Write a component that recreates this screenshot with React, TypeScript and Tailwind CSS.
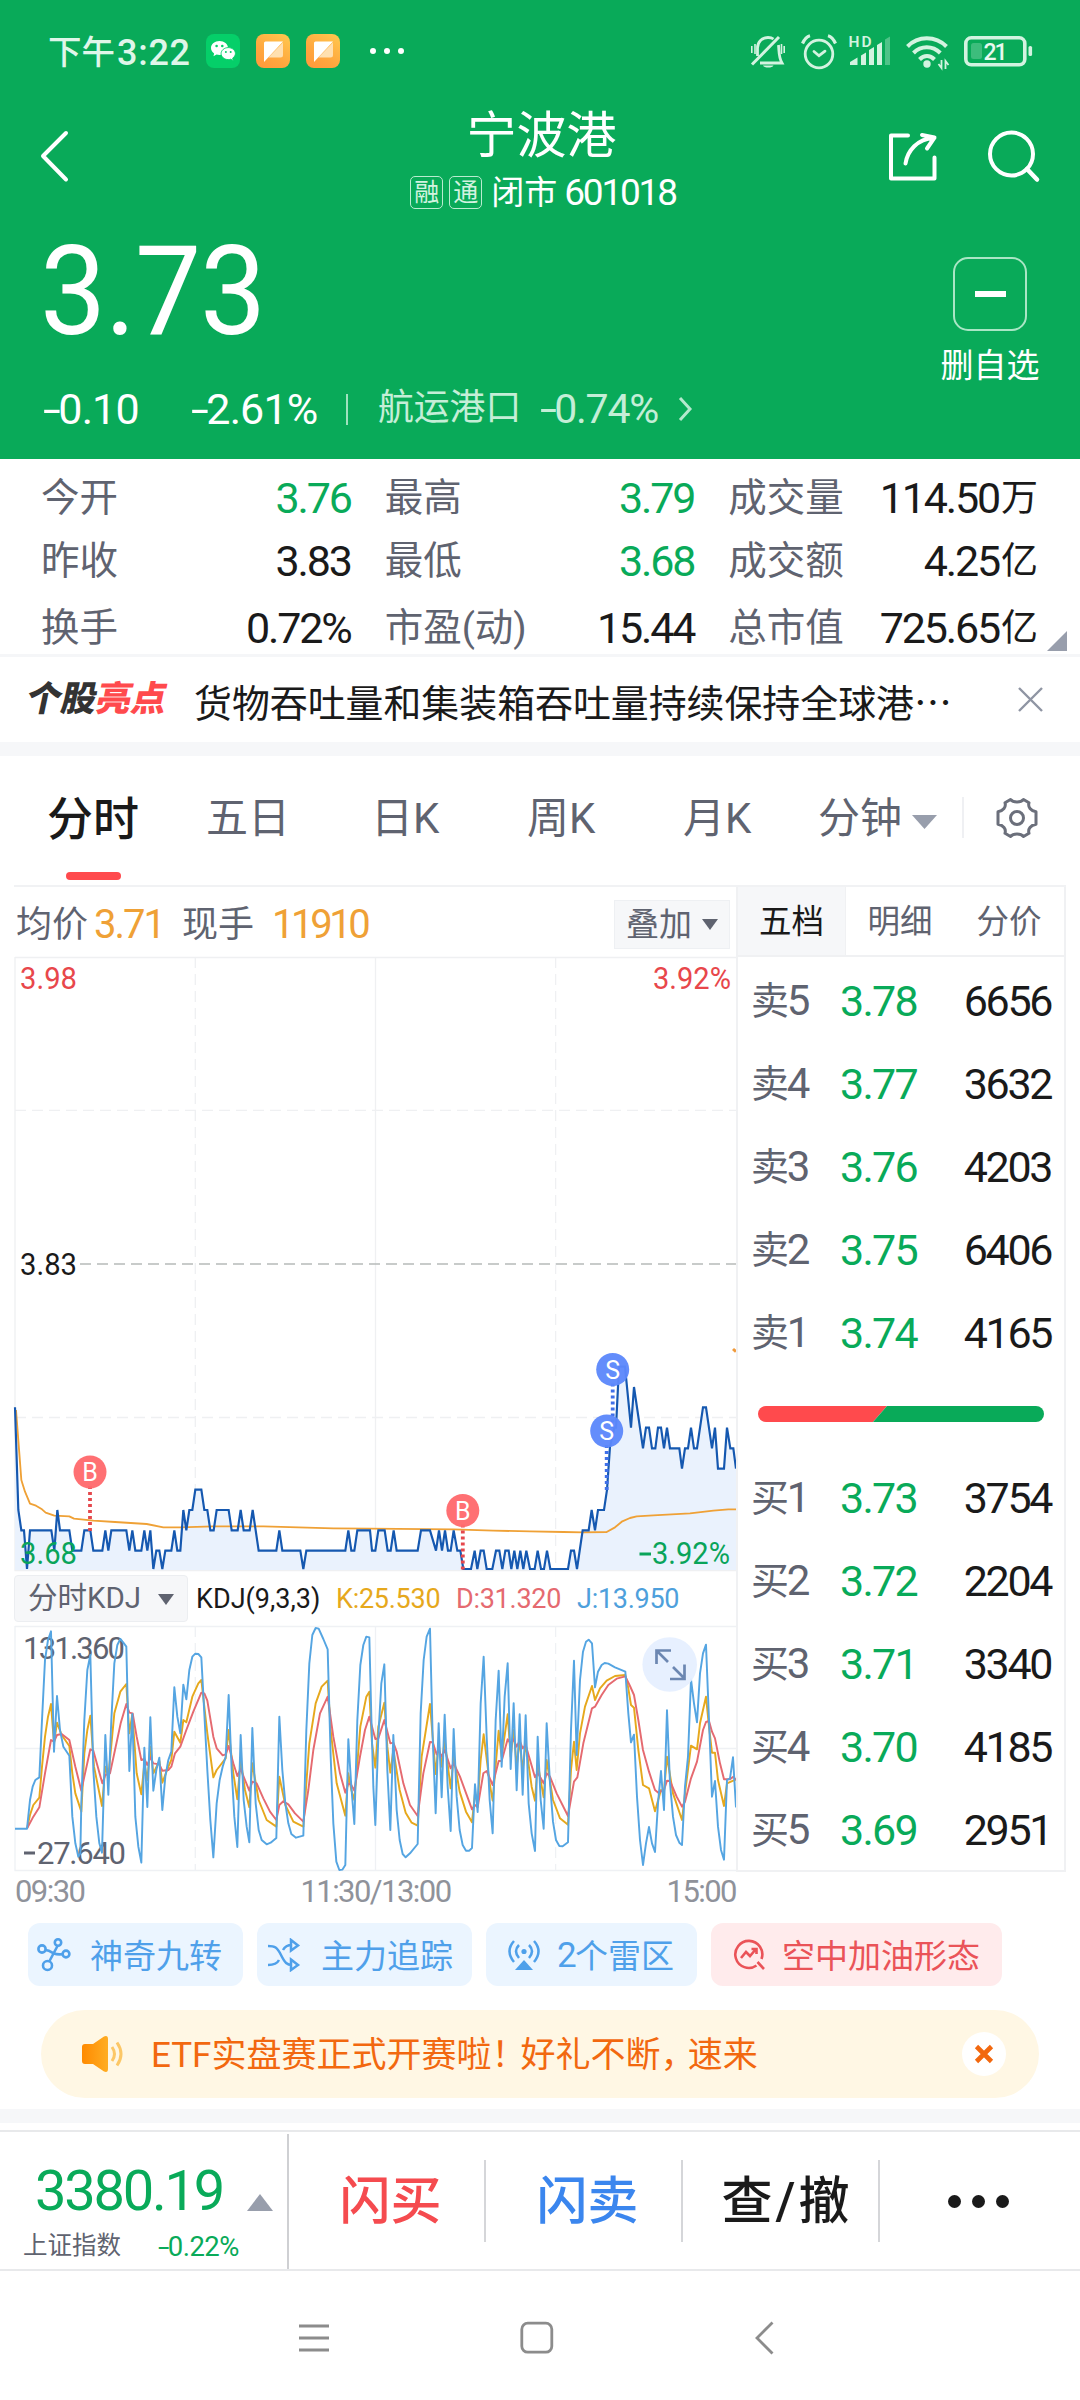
import React from "react";

const GREEN = "text-[#09aa59]";

/* ---------- small pieces ---------- */

function Neg({ children }: { children: React.ReactNode }) {
  return (
    <span className="inline-flex items-center">
      <span className="mr-[0.1em] inline-block origin-left scale-x-150">-</span>
      <span>{children}</span>
    </span>
  );
}

function Caret({ className, w, h }: { className: string; w: number; h: number }) {
  return (
    <svg className={className} width={w} height={h} viewBox="0 0 10 10" preserveAspectRatio="none">
      <path d="M0 0h10L5 10z" fill="currentColor" />
    </svg>
  );
}

function WechatIcon() {
  return (
    <svg width="34" height="34" viewBox="0 0 34 34">
      <rect width="34" height="34" rx="8" fill="#05cf69" />
      <path d="M13.5 7C8.800 7 5 10.100 5 14c0 2.200 1.200 4.100 3.100 5.400L7.500 22.300l3-1.700c1 .3 2 .4 3 .4 4.700 0 8.500-3.100 8.500-7S18.200 7 13.500 7z" fill="#fff" />
      <path d="M22.300 13.600c-4 0-7.200 2.700-7.200 6s3.200 6 7.200 6c.9 0 1.700-.1 2.500-.4l2.400 1.500-.5-2.600c1.700-1.100 2.700-2.700 2.700-4.500 0-3.300-3.100-6-7.100-6z" fill="#fff" stroke="#05cf69" strokeWidth="0.9" />
      <circle cx="10.600" cy="12" r="1.300" fill="#05cf69" />
      <circle cx="16.300" cy="12" r="1.300" fill="#05cf69" />
      <circle cx="19.900" cy="18" r="1" fill="#05cf69" />
      <circle cx="24.700" cy="18" r="1" fill="#05cf69" />
    </svg>
  );
}

function NoteIcon({ id }: { id: string }) {
  return (
    <svg width="34" height="34" viewBox="0 0 34 34">
      <defs>
        <linearGradient id={id} x1="1" y1="0" x2="0.300" y2="1">
          <stop offset="0" stopColor="#ffc94f" />
          <stop offset="0.700" stopColor="#ffa63e" />
          <stop offset="1" stopColor="#ff9c3c" />
        </linearGradient>
      </defs>
      <rect width="34" height="34" rx="8" fill={`url(#${id})`} />
      <path d="M27 8.500v12.500a2.500 2.500 0 0 1-2.500 2.500H12.500z" fill="#ffe0b0" />
      <path d="M8 9a1.500 1.500 0 0 1 1.500-1.500H27L8 28z" fill="#fff" />
    </svg>
  );
}

function StatusIcons() {
  return (
    <svg width="284" height="40" viewBox="750 31 284 40" fill="none" stroke="#d3f3e0" strokeWidth="2.800">
      {/* muted bell */}
      <path d="M752 64.500 779 37" strokeWidth="3" />
      <path d="M757.500 56V48c0-6 4.500-10.500 10.500-10.500 2.500 0 4.300.6 5.500 1.500M778.500 45c.8 8 0 12 3.500 18H760" />
      <path d="M763 65.500a5.500 3 0 0 0 10.500 0z" fill="#d3f3e0" stroke="none" />
      <path d="M751.800 46v7M755 44v10M781.500 44v10M784.200 46v7" strokeWidth="1.600" />
      {/* alarm */}
      <circle cx="819" cy="54" r="13.800" />
      <path d="m814 51.500 5 4.200 6-4.500" strokeLinecap="round" />
      <path d="M802.500 43.500q3-6.500 7.500-7.700M835.500 43.500q-3-6.500-7.500-7.700" strokeWidth="3.200" />
      {/* signal */}
      <text x="848.500" y="46.500" textLength="23" fill="#d3f3e0" stroke="none" fontSize="15.500" fontWeight="600" fontFamily="Roboto">HD</text>
      <g fill="#d3f3e0" stroke="none">
        <path d="M850 65v-3l7.500-4.500V65zM861 65V55.500l5-3V65zM869 65V50l5-3v18zM877 65V45l5-3v23z" />
        <path d="M885 65V39.500l5-3V65z" opacity="0.350" />
      </g>
      {/* wifi */}
      <g strokeWidth="4">
        <path d="M907.500 46.500c10.500-11 28-11 39 0" />
        <path d="M913.500 53c7.500-7.600 19-7.600 26.800 0" />
        <path d="M919.500 59.500c4.500-4.600 10.500-4.600 15 0" />
      </g>
      <circle cx="927" cy="64" r="3.700" fill="#d3f3e0" stroke="none" />
      <path d="M941.500 60v8l-3-4M945.500 69v-8l3 4" strokeWidth="1.800" />
      {/* battery */}
      <rect x="965.800" y="37.800" width="59" height="27" rx="5.500" strokeWidth="3.600" />
      <rect x="971" y="43" width="11" height="16" rx="2.500" fill="#3dbd7c" stroke="none" />
      <rect x="1028.500" y="46" width="3.600" height="10" rx="1.600" fill="#d3f3e0" stroke="none" />
      <text x="983.500" y="59.500" textLength="24" fill="#e8f9ef" stroke="none" fontSize="23" fontWeight="500" fontFamily="Roboto">21</text>
    </svg>
  );
}

/* ---------- header ---------- */

function Header() {
  return (
    <header className="flex h-[459px] flex-col bg-[#09aa59] text-white">
      <div className="flex h-[102px] items-center justify-between pl-[48px] pr-[46px]">
        <div className="flex items-center">
          <span className="flex w-[158px] items-center whitespace-nowrap pt-[3px] text-[33.500px] font-medium leading-none text-[#dff6e9]">
            下午<span className="ml-[2px] text-[36px] tracking-[0.020em]">3:22</span>
          </span>
          <span className="flex gap-[16px]">
            <WechatIcon />
            <NoteIcon id="note-a" />
            <NoteIcon id="note-b" />
          </span>
          <span className="ml-[30px] flex gap-[8px]">
            <i className="size-[6px] rounded-full bg-white" />
            <i className="size-[6px] rounded-full bg-white" />
            <i className="size-[6px] rounded-full bg-white" />
          </span>
        </div>
        <StatusIcons />
      </div>

      <div className="flex h-[120px] justify-between">
        <svg className="ml-[38px] mt-[26px] w-[366px]" width="366" height="56" viewBox="38 128 366 56" fill="none">
          <path d="M66 133 43 156l23 23.500" stroke="#fff" strokeWidth="4" strokeLinecap="round" strokeLinejoin="round" />
        </svg>
        <div className="flex w-[270px] flex-col items-center pt-[9px]">
          <h1 className="text-[50px] leading-[50px]">宁波港</h1>
          <div className="mt-[11px] flex h-[40px] items-center whitespace-nowrap pl-[3px]">
            <span className="flex size-[33px] items-center justify-center rounded-[5px] border-[1.500px] border-[#b9ecd0] text-[25px] leading-none text-[#d3f3e0]">融</span>
            <span className="ml-[6px] flex size-[33px] items-center justify-center rounded-[5px] border-[1.500px] border-[#b9ecd0] text-[25px] leading-none text-[#d3f3e0]">通</span>
            <span className="ml-[9px] text-[33px] leading-none">闭市</span>
            <span className="ml-[7px] text-[37px] leading-none tracking-[-0.060em]">601018</span>
          </div>
        </div>
        <svg className="mr-[36px] mt-[26px]" width="365" height="56" viewBox="679 128 365 56" fill="none" stroke="#fff" strokeWidth="4" strokeLinecap="round" strokeLinejoin="round">
          <path d="M908 135.500H891v43h43.500v-21" />
          <path d="M905.500 163.500c2-13 12-24.500 28-25.500M922 135l12.500 2.500-7.500 11" />
          <circle cx="1011.500" cy="154" r="21.500" />
          <path d="m1027 169 10 10.500" strokeWidth="4.500" />
        </svg>
      </div>

      <div className="flex grow justify-between">
        <div className="flex flex-col">
          <div className="ml-[40px] mt-[7px] h-[126px] origin-left scale-x-[0.950] text-[124px] leading-[126px] tracking-[-0.010em]">
            3.73
          </div>
          <div className="mt-[21px] flex h-[66px] items-center whitespace-nowrap text-[43px] leading-none">
            <span className="ml-[43px] w-[148px] tracking-[-0.020em]"><Neg>0.10</Neg></span>
            <span className="w-[155px] tracking-[-0.020em]"><Neg>2.61%</Neg></span>
            <i className="h-[31px] w-[2px] bg-[#9fe2be]" />
            <span className="ml-[30px] w-[162px] text-[35.800px] text-[#c4eed7]">航运港口</span>
            <span className="w-[138px] text-[41px] tracking-[-0.030em] text-[#c4eed7]"><Neg>0.74%</Neg></span>
            <svg width="16" height="26" viewBox="0 0 16 26" fill="none">
              <path d="m2 2 10 11L2 24" stroke="#b4e9cd" strokeWidth="3" />
            </svg>
          </div>
        </div>
        <div className="mr-[40px] mt-[35px] flex w-[100px] flex-col items-center">
          <div className="flex size-[74px] items-center justify-center rounded-[15px] border-2 border-[#a9e6c5]">
            <i className="h-[6px] w-[31px] bg-white" />
          </div>
          <span className="mt-[18px] whitespace-nowrap text-[33px] leading-none">删自选</span>
        </div>
      </div>
    </header>
  );
}

/* ---------- quote statistics ---------- */

const STATS = [
  { h: "h-[62px] pt-[17px]", cells: [["今开", "3.76", "", GREEN], ["最高", "3.79", "", GREEN], ["成交量", "114.50", "万", "text-[#1a1a1a]"]] },
  { h: "h-[63px] pt-[17px]", cells: [["昨收", "3.83", "", "text-[#1a1a1a]"], ["最低", "3.68", "", GREEN], ["成交额", "4.25", "亿", "text-[#1a1a1a]"]] },
  { h: "h-[68px] pt-[21px]", cells: [["换手", "0.72%", "", "text-[#1a1a1a]"], ["市盈(动)", "15.44", "", "text-[#1a1a1a]"], ["总市值", "725.65", "亿", "text-[#1a1a1a]"]] },
];

function Stats() {
  return (
    <section className="relative h-[198px] border-b-[3px] border-[#f5f6f8] pl-[41px] pr-[42px]">
      {STATS.map((row, r) => (
        <div key={r} className={`flex items-center gap-[34px] ${row.h}`}>
          {row.cells.map(([label, value, unit, color]) => (
            <div key={label} className="flex w-[310px] items-center justify-between whitespace-nowrap leading-none">
              <span className="text-[38.500px] text-[#5f6370]">{label}</span>
              <span className={`flex items-center ${color}`}>
                <span className="text-[43px] tracking-[-0.050em]">{value}</span>
                {unit && <span className="ml-[2px] text-[37px]">{unit}</span>}
              </span>
            </div>
          ))}
        </div>
      ))}
      <svg className="absolute bottom-[3px] right-[13px]" width="20" height="20" viewBox="0 0 20 20">
        <path d="M20 0v20H0z" fill="#989eac" />
      </svg>
    </section>
  );
}

function Highlight() {
  return (
    <section className="flex h-[85px] items-center">
      <div className="ml-[27px] flex w-[167px] -skew-x-12 items-center whitespace-nowrap text-[35px] font-black leading-none text-[#333]">
        个股<span className="text-[#ff4a4d]">亮点</span>
      </div>
      <p className="w-[824px] whitespace-nowrap pt-[2px] font-['Noto_Sans_CJK_SC',sans-serif] text-[37.900px] leading-none text-[#1a1a1a]">
        货物吞吐量和集装箱吞吐量持续保持全球港…
      </p>
      <svg width="25" height="25" viewBox="0 0 25 25">
        <path d="m1 1 23 23M24 1 1 24" stroke="#8f95a3" strokeWidth="2.400" />
      </svg>
    </section>
  );
}

function Tabs() {
  return (
    <nav className="mx-[14px] flex h-[131px] whitespace-nowrap border-b-2 border-[#f1f2f4] text-[42px] leading-none text-[#5f6370]">
      <div className="flex w-[171px] flex-col items-start pl-[33px] pt-[40px]">
        <span className="text-[46px] font-medium text-[#1a1a1a]">分时</span>
        <i className="ml-[19px] mt-[30px] h-[8px] w-[55px] rounded-full bg-[#ff4a4d]" />
      </div>
      <span className="w-[154px] pl-[21px] pt-[42px]">五日</span>
      <span className="w-[158px] pl-[32px] pt-[42px]">日K</span>
      <span className="w-[158px] pl-[30px] pt-[42px]">周K</span>
      <span className="w-[134px] pl-[28px] pt-[42px]">月K</span>
      <span className="flex w-[173px] items-start pl-[29px] pt-[42px]">
        分钟<Caret className="ml-[10px] mt-[17px] text-[#989eac]" w={25} h={14} />
      </span>
      <i className="mt-[41px] h-[41px] w-[2px] bg-[#eff0f3]" />
      <svg className="ml-[31px] mt-[40px]" width="44" height="44" viewBox="-22 -22 44 44" fill="none" stroke="#6b6f7b" strokeWidth="3">
        <path strokeLinejoin="round" d="M-6.500 -18.500Q-4.500 -16 0 -16Q4.500 -16 6.500 -18.500L12 -15.300Q11 -12 13 -9.500Q15 -7 19 -6.300V6.300Q15 7 13 9.500Q11 12 12 15.300L6.500 18.500Q4.500 16 0 16Q-4.500 16 -6.500 18.500L-12 15.300Q-11 12 -13 9.500Q-15 7 -19 6.300V-6.300Q-15 -7 -13 -9.500Q-11 -12 -12 -15.300Z" />
        <circle r="6.500" />
      </svg>
    </nav>
  );
}

/* ---------- charts ---------- */

/* Series points are stored at three units per pixel. */
const PRICE =
  "45,232 55,540 64,601 72,601 81,717 90,601 154,601 163,662 172,540 180,601 208,601 217,662 244,662 253,601 271,601 280,662 307,662 316,601 325,662 334,601 379,601 388,662 397,601 406,662 424,662 433,601 442,662 451,601 460,717 469,662 478,662 487,717 496,662 514,662 523,601 532,662 541,662 550,540 559,601 568,540 577,540 586,479 604,479 613,540 622,540 631,601 641,601 650,540 686,540 695,601 713,601 722,540 731,601 749,601 758,540 776,662 829,662 838,601 847,662 901,662 910,717 919,662 1036,662 1045,601 1054,662 1063,662 1072,601 1110,601 1116,662 1126,662 1135,601 1154,601 1163,662 1172,662 1181,601 1190,662 1253,662 1263,601 1290,601 1308,662 1317,601 1326,662 1335,601 1344,662 1352,662 1361,601 1372,662 1381,662 1390,717 1413,717 1424,662 1432,717 1442,662 1451,662 1460,717 1477,717 1488,662 1498,662 1507,717 1516,662 1526,662 1534,717 1543,662 1552,717 1561,662 1570,717 1579,662 1590,717 1604,717 1613,662 1623,717 1632,717 1641,662 1651,717 1704,717 1713,662 1722,662 1731,717 1748,601 1766,601 1775,540 1785,601 1794,540 1812,540 1821,480 1830,350 1843,293 1848,293 1857,110 1875,110 1893,293 1902,171 1929,355 1938,293 1947,293 1956,355 1966,355 1974,293 1983,293 1992,355 2001,293 2010,355 2038,355 2046,416 2055,355 2064,355 2073,293 2082,355 2091,355 2109,232 2118,232 2136,355 2145,293 2154,416 2172,416 2181,293 2191,355 2200,355 2208,416";
const AVERAGE =
  "48,240 58,370 64,450 75,485 90,521 108,527 126,538 137,548 163,557 208,559 222,566 280,572 345,576 440,582 490,592 540,592 640,589 790,589 1000,595 1110,596 1360,598 1480,602 1590,604 1690,606 1750,607 1820,606 1845,592 1867,574 1890,564 1910,559 1960,556 2070,550 2140,542 2185,538 2208,538";
const J_LINE =
  "45,776 81,776 90,690 98,650 106,630 118,622 126,450 135,270 144,210 153,184 162,545 171,378 180,480 190,530 208,557 217,740 226,820 235,860 241,850 244,700 253,450 262,300 271,255 280,600 289,740 298,820 306,848 316,495 325,674 334,450 343,280 352,225 361,207 370,218 379,230 388,603 397,432 406,740 415,830 424,878 433,533 442,711 451,442 460,662 469,600 478,563 487,720 496,620 505,570 514,545 523,352 532,440 541,490 550,344 559,388 568,300 577,260 586,251 595,252 604,262 622,600 631,750 640,862 650,700 659,630 668,590 677,560 686,375 695,600 703,740 712,831 722,495 731,690 740,770 748,817 757,474 767,700 776,780 785,810 800,823 812,818 829,804 838,440 847,600 856,700 865,760 874,792 888,803 910,797 919,480 928,280 937,195 947,174 956,176 970,207 983,238 992,560 1000,760 1009,875 1018,900 1027,899 1036,885 1045,508 1054,650 1063,762 1072,450 1081,285 1090,225 1099,200 1108,202 1114,440 1120,650 1126,765 1135,500 1144,340 1153,283 1162,600 1171,780 1180,495 1190,720 1199,810 1208,852 1217,862 1230,850 1253,822 1262,430 1271,270 1280,200 1290,176 1298,500 1307,730 1316,460 1325,682 1334,434 1343,650 1352,783 1361,477 1370,680 1379,780 1388,825 1398,842 1408,842 1416,834 1425,643 1433,726 1442,400 1451,260 1460,500 1469,690 1478,790 1487,450 1496,302 1505,590 1514,380 1523,280 1532,597 1541,400 1550,661 1559,433 1568,674 1577,436 1586,700 1595,790 1605,843 1613,500 1622,690 1631,776 1640,460 1650,640 1659,755 1668,810 1678,828 1688,829 1704,817 1713,480 1722,272 1730,555 1740,330 1749,245 1758,215 1766,209 1776,220 1785,352 1794,305 1805,285 1814,279 1825,281 1845,292 1876,305 1885,430 1893,517 1902,494 1911,680 1920,810 1929,885 1938,820 1947,771 1956,820 1965,846 1974,700 1983,603 1992,720 2001,421 2010,640 2019,740 2028,795 2038,818 2046,825 2055,650 2064,560 2073,328 2082,400 2091,457 2100,310 2109,250 2118,224 2127,450 2136,680 2145,633 2154,770 2163,840 2172,869 2181,630 2190,625 2199,562 2208,712";
const K_LINE =
  "81,776 90,735 100,705 118,683 126,590 135,500 144,440 153,402 162,520 171,458 185,495 208,528 217,610 226,670 244,725 253,550 262,480 271,437 282,590 306,708 316,590 325,620 343,430 361,365 379,342 388,490 397,432 410,610 424,673 433,580 442,630 451,530 460,610 478,573 487,638 505,590 514,570 523,485 541,518 550,450 559,457 577,380 595,340 604,330 622,490 640,622 650,600 677,565 686,480 700,610 712,688 722,570 735,660 748,712 757,580 776,690 800,750 829,770 838,620 856,705 880,755 910,770 919,640 928,520 947,400 965,350 983,332 992,480 1010,640 1036,737 1045,610 1054,660 1063,690 1081,470 1099,380 1108,365 1116,520 1126,593 1135,470 1153,398 1162,530 1171,608 1180,540 1199,660 1217,728 1235,758 1253,767 1265,560 1290,402 1307,612 1316,520 1325,590 1334,510 1352,655 1361,560 1379,665 1398,725 1416,757 1425,670 1433,700 1442,570 1451,493 1469,640 1478,692 1496,482 1505,560 1523,433 1532,560 1541,480 1550,590 1559,510 1568,600 1577,520 1595,650 1605,692 1613,580 1631,682 1640,570 1659,690 1680,745 1704,764 1713,600 1722,515 1730,600 1740,490 1755,410 1776,348 1785,390 1800,355 1820,332 1845,318 1876,315 1885,355 1893,405 1902,413 1915,540 1929,645 1947,655 1965,724 1983,660 1992,665 2001,560 2019,670 2046,750 2055,670 2073,527 2091,538 2100,460 2118,380 2127,470 2136,548 2145,548 2154,630 2172,708 2181,640 2208,628";
const D_LINE =
  "81,776 100,740 118,712 135,610 153,510 162,515 171,495 185,492 208,510 226,590 244,662 253,620 271,538 280,542 307,640 316,615 330,610 345,540 362,460 379,402 388,428 398,430 410,500 424,570 433,567 442,585 451,562 460,580 478,583 487,602 505,600 514,590 525,550 541,530 559,480 580,425 604,368 613,370 622,392 640,500 650,535 668,556 677,553 686,528 700,580 712,618 722,597 735,630 748,662 757,635 770,640 790,685 810,725 829,750 838,705 850,694 865,703 885,730 910,755 925,660 940,540 960,430 983,380 1000,500 1020,610 1036,668 1045,640 1054,645 1063,662 1080,560 1095,480 1108,440 1126,507 1135,505 1153,450 1171,520 1180,518 1190,545 1210,640 1230,705 1253,738 1270,610 1290,516 1298,517 1310,553 1316,540 1325,560 1334,540 1352,595 1361,580 1380,620 1416,718 1425,705 1433,712 1450,610 1460,603 1478,645 1496,573 1505,573 1523,508 1532,520 1541,508 1550,530 1559,512 1568,535 1577,525 1605,622 1613,608 1631,640 1640,610 1650,620 1670,670 1704,738 1722,635 1732,622 1750,520 1776,415 1785,410 1805,375 1825,345 1850,326 1876,319 1890,348 1902,375 1915,450 1929,540 1947,605 1965,660 1975,668 1992,660 2001,632 2010,633 2030,680 2046,710 2055,695 2073,625 2091,575 2109,480 2118,456 2127,453 2136,485 2145,505 2160,580 2172,628 2190,628 2200,620 2208,630";

const MARKS = [
  { x: 90, y: 1472, t: "B", fill: "#ff6a6d", line: "#e5484d", to: 1531 },
  { x: 462.800, y: 1510.500, t: "B", fill: "#ff6a6d", line: "#e5484d", to: 1570 },
  { x: 612.700, y: 1369.500, t: "S", fill: "#5d88fb", line: "#4070e8", to: 1428 },
  { x: 606.700, y: 1431, t: "S", fill: "#5d88fb", line: "#4070e8", to: 1490 },
];

function PriceChart() {
  return (
    <svg className="block shrink-0" width="737" height="617" viewBox="0 956 737 617" fontFamily="Roboto" fontSize="30.500">
      <g fill="none" stroke="#eff0f2" strokeWidth="1.300">
        <path d="M15 957.500H737M15 957V1570.500H737M375.500 957v613" />
        <path d="M195.300 957v613M555.600 957v613" strokeDasharray="11 6" />
        <path d="M15 1110.300H737M15 1417.500H737" strokeDasharray="11 6" />
      </g>
      <path d="M80 1264H737" stroke="#b6bab9" strokeWidth="1.700" strokeDasharray="11 6" />
      <g transform="translate(0 1330) scale(0.33333)" fill="none" strokeLinejoin="round">
        <polygon points={`45,720 ${PRICE} 2208,720`} fill="#eaf2fd" />
        <polyline points={AVERAGE} stroke="#efa136" strokeWidth="5.500" />
        <polyline points={PRICE} stroke="#1558b0" strokeWidth="6.500" strokeLinejoin="miter" />
        <path d="M2199 57l9 8" stroke="#f09a3c" strokeWidth="9" />
      </g>
      {MARKS.map((m, i) => (
        <g key={i}>
          <path d={`M${m.x} ${m.y + 14}V${m.to}`} stroke={m.line} strokeWidth="3.800" strokeDasharray="3 3" />
          <circle cx={m.x} cy={m.y} r="16.500" fill={m.fill} fillOpacity="0.960" />
          <text x={m.x} y={m.y + 9} textAnchor="middle" fontSize="25" fill="#fff">{m.t}</text>
        </g>
      ))}
      <text x="20" y="989" textLength="57" lengthAdjust="spacingAndGlyphs" fill="#e8474b">3.98</text>
      <text x="731" y="989" textAnchor="end" textLength="78" lengthAdjust="spacingAndGlyphs" fill="#e8474b">3.92%</text>
      <text x="20" y="1275" textLength="57" lengthAdjust="spacingAndGlyphs" fill="#1a1a1a">3.83</text>
      <text x="20" y="1564" textLength="57" lengthAdjust="spacingAndGlyphs" fill="#09a45a">3.68</text>
      <rect x="639.500" y="1552.500" width="11.500" height="3" fill="#09a45a" />
      <text x="652" y="1564" textLength="78" lengthAdjust="spacingAndGlyphs" fill="#09a45a">3.92%</text>
    </svg>
  );
}

function KdjChart() {
  return (
    <svg className="block shrink-0" width="737" height="250" viewBox="0 1624 737 250" fontFamily="Roboto" fontSize="31">
      <g fill="none" stroke="#eff1f4" strokeWidth="1.300">
        <path d="M15 1626.500H737M15 1626V1870.500H737M375.500 1626v244M15 1748.500H737" />
        <path d="M195.300 1626v244M555.600 1626v244" strokeDasharray="11 6" />
      </g>
      <text x="23" y="1658.500" textLength="102" fill="#5f6370">131.360</text>
      <rect x="24" y="1851.500" width="11" height="3" fill="#5f6370" />
      <text x="37" y="1864" textLength="89" fill="#5f6370">27.640</text>
      <g transform="translate(0 1570) scale(0.33333)" fill="none" strokeLinejoin="round" strokeWidth="5.800">
        <polyline points={K_LINE} stroke="#e6a81c" />
        <polyline points={D_LINE} stroke="#e56a70" />
        <polyline points={J_LINE} stroke="#55a5e2" />
      </g>
      <circle cx="669.700" cy="1664.500" r="27.300" fill="#e6efff" fillOpacity="0.950" />
      <path d="M656.500 1664v-13.500H671M657 1651l11 11M673 1667l11 11M670 1679h14.500v-14.500" fill="none" stroke="#6c87b2" strokeWidth="2.700" />
    </svg>
  );
}

function ChartColumn() {
  return (
    <div className="flex w-[736px] flex-col whitespace-nowrap leading-none">
      <div className="flex h-[69px] shrink-0 items-center pl-[16px] pr-[6px] pt-[5px] text-[36px] text-[#5f6370]">
        <span className="pt-[2px]">均价</span>
        <span className="ml-[6px] w-[88px] pt-[1px] text-[40px] tracking-[-0.050em] text-[#efa136]">3.71</span>
        <span className="pt-[2px]">现手</span>
        <span className="ml-[18px] pt-[1px] text-[40px] tracking-[-0.085em] text-[#efa136]">11910</span>
        <span className="ml-auto flex h-[49px] w-[116px] items-center border border-[#eef0f3] bg-[#f6f7f9] pl-[11px] text-[33px]">
          叠加<Caret className="ml-[10px]" w={16} h={11} />
        </span>
      </div>
      <PriceChart />
      <div className="flex h-[51px] shrink-0 items-center pb-[1px] pl-[14px] text-[27px]">
        <span className="flex h-[47px] w-[174px] items-center rounded-[4px] border border-[#eceef1] bg-[#f6f7f9] pl-[13px] pt-[2px] text-[29.500px] text-[#5f6370]">
          分时KDJ<Caret className="ml-[17px]" w={16} h={11} />
        </span>
        <span className="ml-[8px] w-[140px] pt-[2px] text-[#1a1a1a]">KDJ(9,3,3)</span>
        <span className="w-[120px] pt-[2px] tracking-[-0.010em] text-[#e6a81c]">K:25.530</span>
        <span className="w-[121px] pt-[2px] tracking-[-0.010em] text-[#e56a70]">D:31.320</span>
        <span className="pt-[2px] tracking-[-0.010em] text-[#4ea0dc]">J:13.950</span>
      </div>
      <KdjChart />
      <div className="flex h-[31px] shrink-0 justify-between pl-[15px] pt-[2px] text-[31px] tracking-[-0.050em] text-[#8f929a]">
        <span>09:30</span>
        <span>11:30/13:00</span>
        <span>15:00</span>
      </div>
    </div>
  );
}

/* ---------- order book ---------- */

const ASKS = [["卖5", "3.78", "6656"], ["卖4", "3.77", "3632"], ["卖3", "3.76", "4203"], ["卖2", "3.75", "6406"], ["卖1", "3.74", "4165"]];
const BIDS = [["买1", "3.73", "3754"], ["买2", "3.72", "2204"], ["买3", "3.71", "3340"], ["买4", "3.70", "4185"], ["买5", "3.69", "2951"]];

function Level({ row }: { row: string[] }) {
  return (
    <div className="flex h-[83px] items-center pl-[13px] pr-[13px] pt-[3px] text-[43px] tracking-[-0.055em]">
      <span className="flex w-[89px] items-center text-[38px] text-[#5f6370]">
        {row[0][0]}<span className="text-[42px]">{row[0][1]}</span>
      </span>
      <span className={`tracking-[-0.040em] ${GREEN}`}>{row[1]}</span>
      <span className="ml-auto text-[#1a1a1a]">{row[2]}</span>
    </div>
  );
}

function OrderBook() {
  return (
    <aside className="flex h-[985px] w-[330px] flex-col whitespace-nowrap border-b-2 border-l-2 border-r-2 border-[#f0f1f3] leading-none">
      <div className="flex h-[70px] shrink-0 border-b-2 border-[#f0f1f3] text-[32.500px] text-[#5f6370]">
        <span className="flex w-[108px] items-center justify-center border-r border-[#f0f1f3] bg-[#f6f7f9] pt-[3px] text-[#1a1a1a]">五档</span>
        <span className="flex w-[108px] items-center justify-center pt-[3px]">明细</span>
        <span className="flex w-[110px] items-center justify-center pt-[3px]">分价</span>
      </div>
      <div className="pt-[1px]">
        {ASKS.map((r) => <Level key={r[0]} row={r} />)}
      </div>
      <svg className="my-[33px] ml-[20px] shrink-0" width="286" height="16" viewBox="0 0 286 16">
        <path d="M8 0H129L115 16H8A8 8 0 0 1 8 0z" fill="#ff4a4d" />
        <path d="M129 0H278a8 8 0 0 1 0 16H115z" fill="#09aa59" />
      </svg>
      <div>
        {BIDS.map((r) => <Level key={r[0]} row={r} />)}
      </div>
    </aside>
  );
}

/* ---------- chips, banner and bars ---------- */

function Chips() {
  const blue = "flex h-[63px] items-center rounded-[12px] bg-[#ebf5ff] text-[#4fa0ea]";
  return (
    <div className="mt-[18px] flex gap-[14px] whitespace-nowrap pl-[28px] text-[33px] leading-none">
      <span className={`${blue} w-[215px] pl-[9px]`}>
        <svg className="mr-[19px]" width="34" height="34" viewBox="0 0 34 34" fill="none" stroke="#4fa0ea" strokeWidth="2.600">
          <circle cx="5" cy="11" r="3.600" />
          <circle cx="21" cy="4.500" r="3.200" />
          <circle cx="29" cy="16" r="3.400" />
          <circle cx="10.500" cy="27.500" r="4.500" />
          <path d="M8.500 12c5 .5 6 2.500 8.500 3.500s5 1 8.500.7M20.500 8 12.500 23" />
        </svg>
        <span className="pt-[3px]">神奇九转</span>
      </span>
      <span className={`${blue} w-[215px] pl-[10px]`}>
        <svg className="mr-[20px]" width="34" height="34" viewBox="0 0 34 34" fill="none" stroke="#4fa0ea" strokeWidth="2.500">
          <path d="M1 8c7 0 9 1 13 9s6 10 11 10M1 27c6 0 9-1 11-5M16 12c2-4 5-5 9-5M24 2l7 5.500-7 5zM24 21.500l7 5.500-7 5z" />
        </svg>
        <span className="pt-[3px]">主力追踪</span>
      </span>
      <span className={`${blue} w-[211px] pl-[21px]`}>
        <svg className="mr-[16px]" width="34" height="34" viewBox="0 0 34 34" fill="none" stroke="#4fa0ea" strokeWidth="2.500">
          <path d="M7 3Q-2 13 7 24M27 3q9 10 0 21M12 7q-6 6 0 13M22 7q6 6 0 13" />
          <circle cx="17" cy="13.500" r="2.600" fill="#4fa0ea" stroke="none" />
          <path d="m17 22 9 10H8z" fill="#4fa0ea" stroke="none" />
        </svg>
        <span className="pt-[2px] text-[35px] tracking-[-0.050em]">2</span>
        <span className="pt-[3px]">个雷区</span>
      </span>
      <span className="flex h-[63px] w-[291px] items-center rounded-[12px] bg-[#ffebec] pl-[22px] text-[#ea5358]">
        <svg className="mr-[15px]" width="34" height="34" viewBox="0 0 34 34" fill="none" stroke="#ea5358" strokeWidth="2.600">
          <path d="M23.500 27.500A13.500 13.500 0 1 1 28.500 21M24.500 24l6.500 7M8 20l5-6 4 4 6-7M18.500 11h5v5" />
        </svg>
        <span className="pt-[3px]">空中加油形态</span>
      </span>
    </div>
  );
}

function Banner() {
  return (
    <div className="ml-[41px] mt-[24px] flex h-[88px] w-[998px] items-center whitespace-nowrap rounded-full bg-[#fff7e4] pl-[40px] pr-[33px] text-[35px] leading-none text-[#f2680f]">
      <svg width="44" height="38" viewBox="0 0 44 38">
        <defs>
          <linearGradient id="horn"><stop offset="0" stopColor="#ff8a00" /><stop offset="1" stopColor="#ffad22" /></linearGradient>
        </defs>
        <path d="M4 9h8L23 1.500Q27 0 27 4V34q0 4-4 2.500L12 29H4q-3 0-3-3V12q0-3 3-3z" fill="url(#horn)" />
        <path d="M31 12q5 7 0 14M36 7.500q8 11.500 0 23" fill="none" stroke="#fcc766" strokeWidth="3" />
      </svg>
      <p className="ml-[26px] pt-[2px]">
        ETF实盘赛正式开赛啦<span className="tracking-[-0.170em]">！</span>好礼不断<span className="tracking-[-0.220em]">，</span>速来
      </p>
      <span className="ml-auto flex size-[44px] items-center justify-center rounded-full bg-white">
        <svg width="20" height="20" viewBox="0 0 20 20">
          <path d="m2.500 2.500 15 15M17.500 2.500l-15 15" stroke="#f2680f" strokeWidth="4.600" />
        </svg>
      </span>
    </div>
  );
}

function BottomBar() {
  const cell = "flex h-[82px] w-[197px] items-center justify-center text-[51px] font-medium";
  return (
    <section className="flex h-[141px] whitespace-nowrap border-b-2 border-t-2 border-[#e8e9eb] leading-none">
      <div className="mt-[2px] h-[135px] w-[289px] border-r-2 border-[#cfd0d3]">
        <div className="flex h-[85px] items-end pl-[35px]">
          <span className={`w-[212px] text-[56px] tracking-[-0.040em] ${GREEN}`}>3380.19</span>
          <svg className="mb-[8px]" width="26" height="17" viewBox="0 0 26 17"><path d="M13 0 26 17H0z" fill="#989eac" /></svg>
        </div>
        <div className="mt-[11px] flex items-center pl-[23px]">
          <span className="w-[135px] pt-[2px] text-[24.500px] text-[#5f6370]">上证指数</span>
          <span className={`pt-[3px] text-[27.500px] tracking-[-0.020em] ${GREEN}`}><Neg>0.22%</Neg></span>
        </div>
      </div>
      <div className="flex pt-[28px]">
        <span className={`${cell} border-r-2 border-[#d5d6d9] pl-[8px] text-[#f54b4f]`}>闪买</span>
        <span className={`${cell} border-r-2 border-[#d5d6d9] pl-[8px] text-[#3b86ee]`}>闪卖</span>
        <span className={`${cell} border-r-2 border-[#d5d6d9] pl-[13px] tracking-[0.060em] text-[#1a1a1a]`}>查/撤</span>
        <span className={`${cell} gap-[11px]`}>
          <i className="size-[13px] rounded-full bg-[#1a1a1a]" />
          <i className="size-[13px] rounded-full bg-[#1a1a1a]" />
          <i className="size-[13px] rounded-full bg-[#1a1a1a]" />
        </span>
      </div>
    </section>
  );
}

function SystemNav() {
  return (
    <div className="flex items-center pl-[298px] pt-[49px]">
      <svg width="480" height="36" viewBox="298 2320 480 36" fill="none" stroke="#8c8c8c" strokeWidth="2.800">
        <path d="M299 2326h30M299 2338h30M299 2350h30" />
        <rect x="521.800" y="2323.200" width="30" height="29" rx="6" />
        <path d="m772.500 2322.500-15.500 15.500 15.500 15.500" />
      </svg>
    </div>
  );
}

export default function App() {
  return (
    <main className="h-[2400px] w-[1080px] overflow-hidden bg-white font-['Roboto','Noto_Sans_CJK_SC',sans-serif]">
      <Header />
      <Stats />
      <Highlight />
      <div className="h-[14px] bg-[#f6f7f9]" />
      <Tabs />
      <div className="flex h-[1018px]">
        <ChartColumn />
        <OrderBook />
      </div>
      <Chips />
      <Banner />
      <div className="mb-[7px] mt-[11px] h-[14px] bg-[#f6f7f9]" />
      <BottomBar />
      <SystemNav />
    </main>
  );
}
